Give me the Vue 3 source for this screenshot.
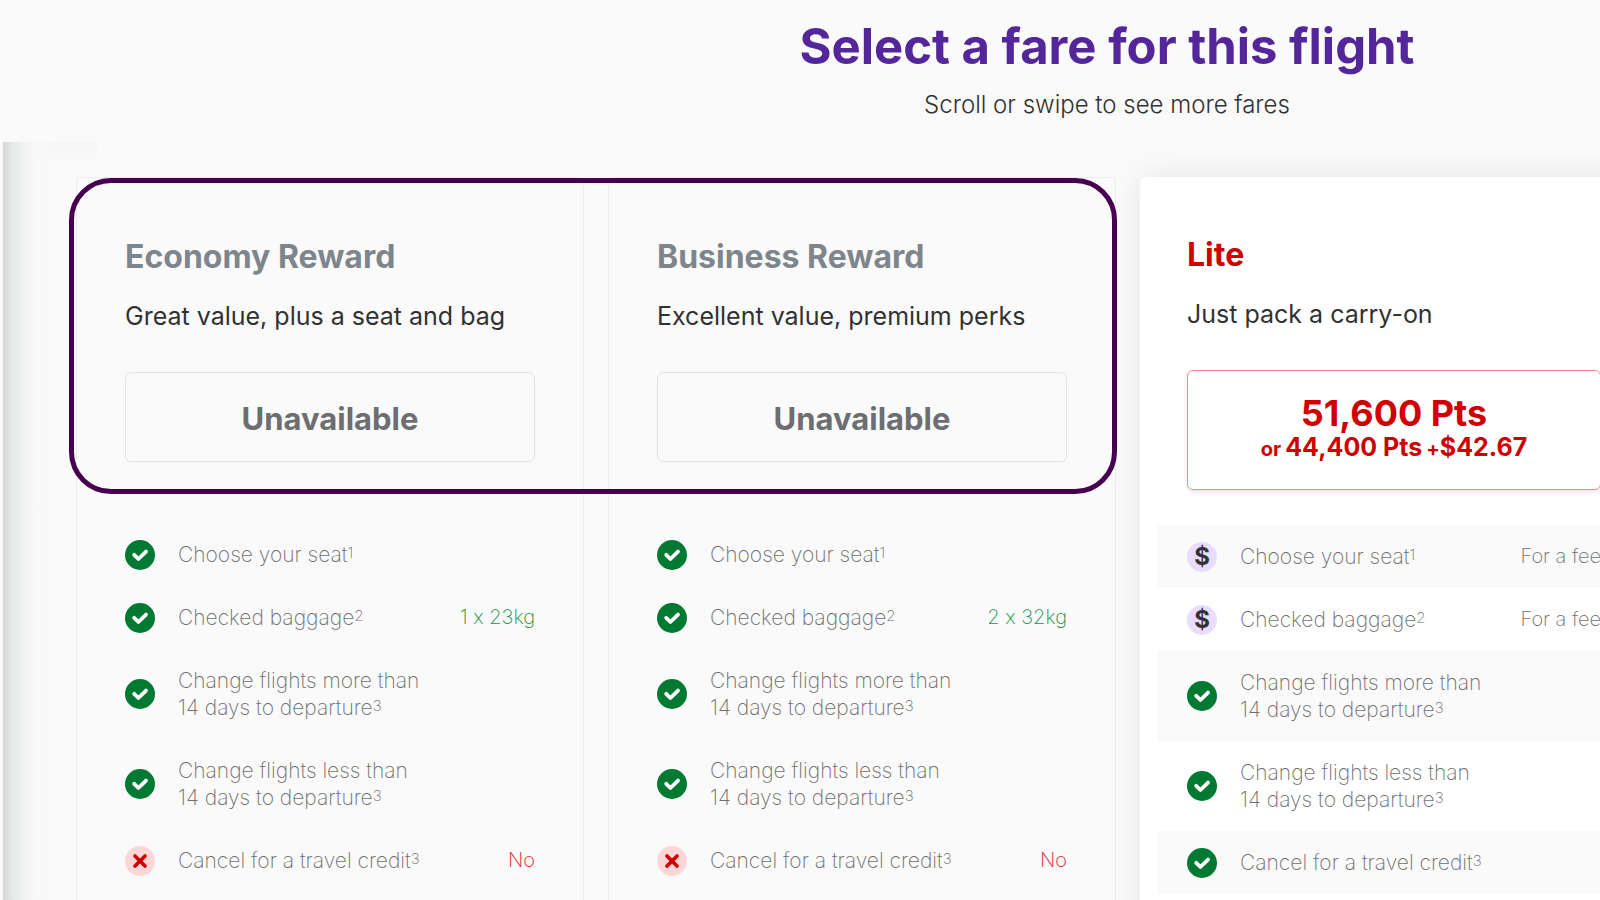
<script setup>
const perks = (seat, bag, cancel) => [
  { lines: ['Choose your seat'], note: '1', ...seat },
  { lines: ['Checked baggage'], note: '2', ...bag },
  { lines: ['Change flights more than', '14 days to departure'], note: '3', icon: 'check' },
  { lines: ['Change flights less than', '14 days to departure'], note: '3', icon: 'check' },
  { lines: ['Cancel for a travel credit'], note: '3', ...cancel }
]

const fares = [
  {
    name: 'Economy Reward',
    tagline: 'Great value, plus a seat and bag',
    features: perks(
      { icon: 'check' },
      { icon: 'check', value: '1 x 23kg' },
      { icon: 'cross', value: 'No' }
    )
  },
  {
    name: 'Business Reward',
    tagline: 'Excellent value, premium perks',
    features: perks(
      { icon: 'check' },
      { icon: 'check', value: '2 x 32kg' },
      { icon: 'cross', value: 'No' }
    )
  },
  {
    name: 'Lite',
    tagline: 'Just pack a carry-on',
    price: { points: '51,600 Pts', altPoints: '44,400 Pts', cash: '$42.67' },
    features: perks(
      { icon: 'fee', value: 'For a fee' },
      { icon: 'fee', value: 'For a fee' },
      { icon: 'check' }
    )
  }
]
</script>

<template>
  <main class="page">
    <header class="intro">
      <h1>Select a fare for this flight</h1>
      <p>Scroll or swipe to see more fares</p>
    </header>

    <section class="scroller">
      <div class="track">
        <article
          v-for="fare in fares"
          :key="fare.name"
          class="card"
          :class="{ available: fare.price }"
        >
          <h2>{{ fare.name }}</h2>
          <p class="tagline">{{ fare.tagline }}</p>

          <button v-if="fare.price" type="button" class="select">
            <span class="points">{{ fare.price.points }}</span>
            <span class="mix">
              <small>or</small>
              <span>{{ fare.price.altPoints }}</span>
              <span><small>+</small>{{ fare.price.cash }}</span>
            </span>
          </button>
          <button v-else type="button" class="select" disabled>Unavailable</button>

          <ul class="features">
            <li v-for="feature in fare.features" :key="feature.lines.join(' ')">
              <span v-if="feature.icon === 'fee'" class="icon fee">$</span>
              <svg v-else-if="feature.icon === 'check'" class="icon" viewBox="0 0 30 30" aria-hidden="true">
                <circle cx="15" cy="15" r="15" fill="#007a33" />
                <path d="M9.2 14.8l4.2 4.2 7.6-7.4" fill="none" stroke="#fff" stroke-width="3.8" stroke-linecap="round" stroke-linejoin="round" />
              </svg>
              <svg v-else class="icon" viewBox="0 0 30 30" aria-hidden="true">
                <circle cx="15" cy="15" r="15" fill="#ffd6d6" />
                <path d="M10 10l10 10M20 10L10 20" fill="none" stroke="#d00000" stroke-width="3.6" stroke-linecap="round" />
              </svg>
              <span class="label">
                <template v-for="(line, i) in feature.lines" :key="line"><br v-if="i">{{ line }}</template><sup>{{ feature.note }}</sup>
              </span>
              <span v-if="feature.value" class="value" :class="feature.icon">{{ feature.value }}</span>
            </li>
          </ul>
        </article>
        <div class="highlight"></div>
      </div>
    </section>
  </main>
</template>

<style>
body {
  margin: 0;
  background: #fafafa;
}
</style>

<style scoped>
.page {
  display: flex;
  flex-direction: column;
  height: 100vh;
  overflow: hidden;
  background: #fafafa;
  color: #323232;
  font-family: Inter, "Open Sans", "Liberation Sans", sans-serif;
  font-variant-ligatures: no-contextual;
}

.intro {
  box-sizing: border-box;
  padding: 19px 0 21px 38.375%;
  text-align: center;
}

h1 {
  margin: 0;
  color: #53269a;
  font-size: 49px;
  font-weight: 700;
  line-height: 56px;
  white-space: nowrap;
}

.intro p {
  margin: 14px 0 0;
  font-size: 24px;
  font-weight: 300;
  line-height: 32px;
}

.scroller {
  position: relative;
  flex: 1;
  min-height: 0;
  overflow: auto hidden;
  scrollbar-width: none;
  padding: 35px 0 0 76px;
}

.scroller::before {
  content: "";
  position: absolute;
  top: 0;
  bottom: 0;
  left: 3px;
  width: 95px;
  background:
    linear-gradient(90deg, #d6d6d6, #e6e7e7 8px, #f0f1f1 20px, #f8f8f8 32px, rgba(250, 250, 250, 0) 56px),
    linear-gradient(#f6f6f6, #fafafa 20px);
}

.track {
  position: relative;
  display: grid;
  grid-auto-flow: column;
  grid-auto-columns: calc(100% / 3);
  gap: 24px;
}

.card {
  box-sizing: border-box;
  border: 1px solid #ececec;
  border-radius: 6px;
  padding: 59px 48px 48px;
  background: #fafafa;
}

.card.available {
  border-color: #fff;
  padding: 57px 46px 48px;
  background: #fff;
  box-shadow: 0 0 32px rgba(0, 0, 0, 0.09);
}

h2 {
  margin: 0;
  color: #7e868c;
  font-size: 32px;
  font-weight: 700;
  line-height: 40px;
}

.available h2 {
  color: #d00000;
}

.tagline {
  margin: 22px 0 39px;
  font-size: 25px;
  font-weight: 400;
  line-height: 34px;
  white-space: nowrap;
}

.select {
  display: flex;
  flex-direction: column;
  align-items: center;
  justify-content: center;
  width: 100%;
  height: 90px;
  border: 1px solid #e4e4e4;
  border-radius: 6px;
  padding: 2px 0 0;
  background: transparent;
  color: #6d6e71;
  font: inherit;
  font-size: 31px;
  font-weight: 700;
}

.available .select {
  height: 120px;
  padding: 0 0 4px;
  border-color: #ee8c8c;
  color: #d00000;
  box-shadow: 0 2px 4px rgba(0, 0, 0, 0.1);
  cursor: pointer;
}

.points {
  font-size: 36px;
  line-height: 40px;
}

.mix {
  display: flex;
  align-items: baseline;
  gap: 4px;
  font-size: 25px;
  line-height: 28px;
  white-space: nowrap;
}

.mix small {
  font-size: 20px;
}

.features {
  list-style: none;
  margin: 61px -30px 0;
  padding: 0;
  color: #6f6f6f;
  font-size: 21px;
  font-weight: 200;
  line-height: 27px;
}

.available .features {
  margin-top: 35px;
}

.features li {
  display: flex;
  align-items: center;
  padding: 18px 30px;
}

.available .features li:nth-child(odd) {
  background: #fafafa;
}

.icon {
  flex: none;
  width: 30px;
  height: 30px;
  margin: -2px 23px -2px 0;
}

.icon.fee {
  border-radius: 50%;
  background: #e9dcff;
  color: #323232;
  font-size: 24px;
  font-weight: 700;
  line-height: 30px;
  text-align: center;
}

.label {
  flex: 1;
  white-space: nowrap;
}

sup {
  font-size: 15px;
  line-height: 0;
  vertical-align: 4px;
}

.value {
  font-size: 20px;
  white-space: nowrap;
}

.value.check {
  color: #159447;
}

.value.cross {
  color: #e6212c;
}

.highlight {
  position: absolute;
  top: 1px;
  left: -7px;
  box-sizing: border-box;
  width: calc(200% / 3 + 32px);
  height: 316px;
  border: 5px solid #470050;
  border-radius: 42px;
  pointer-events: none;
}
</style>
